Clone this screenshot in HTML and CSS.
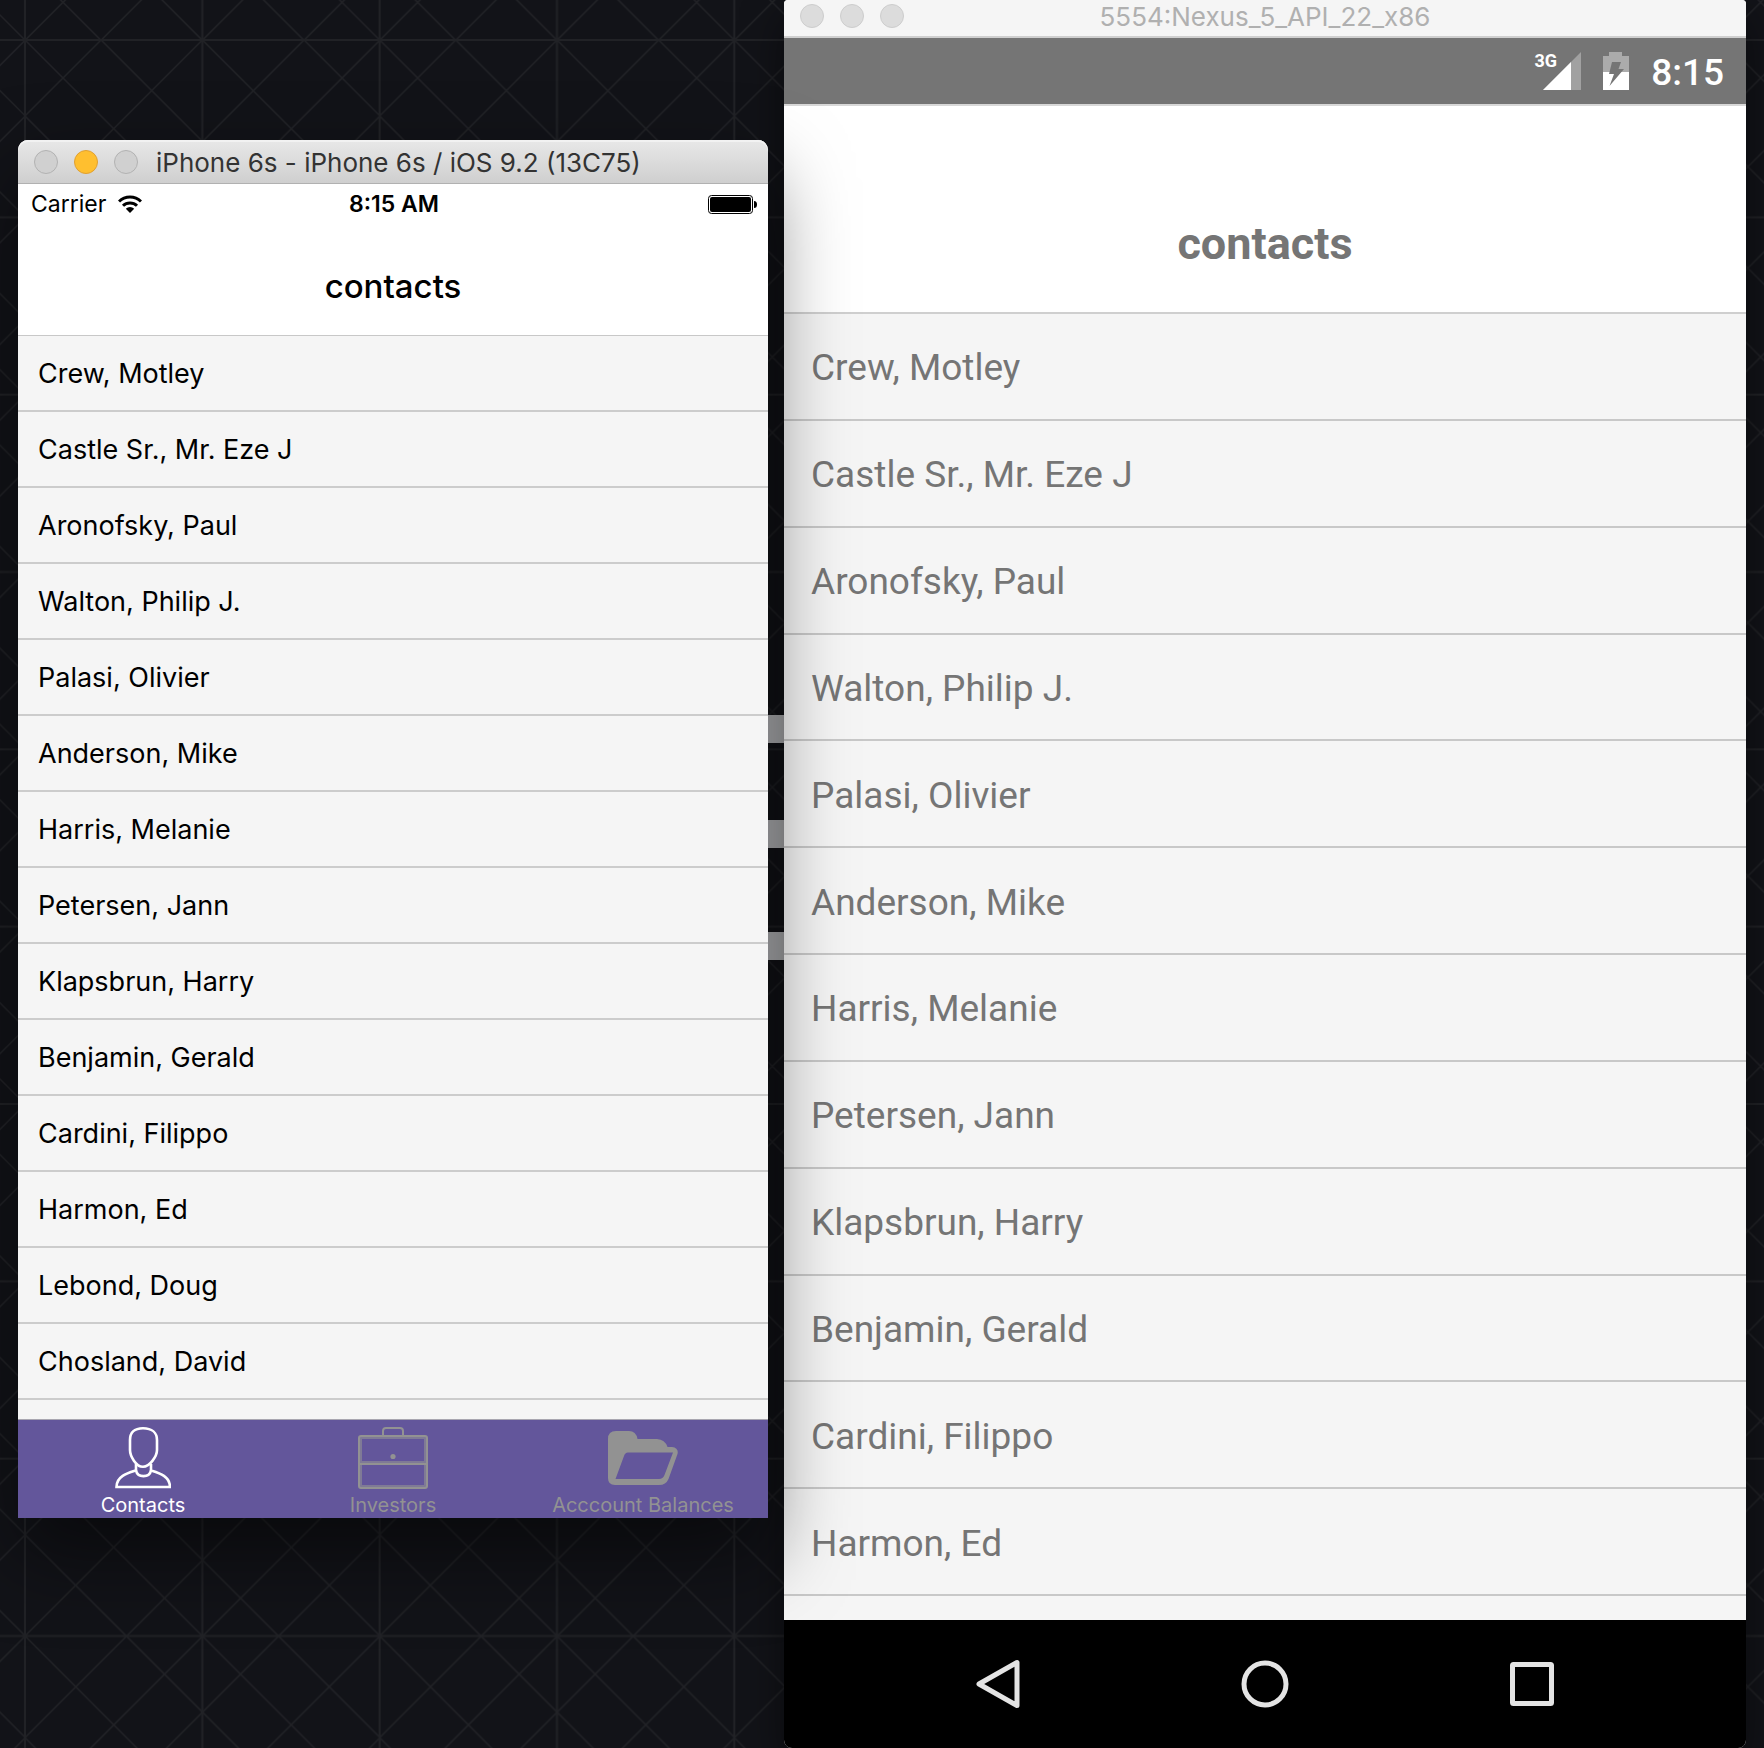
FILE: index.html
```html
<!DOCTYPE html>
<html lang="en">
<head>
<meta charset="utf-8">
<meta name="viewport" content="width=device-width, initial-scale=1">
<title>Contacts</title>
<link rel="stylesheet" href="styles.css">
</head>
<body>
<svg class="wallpaper" aria-hidden="true">
  <defs>
    <pattern id="lattice" x="25" y="40" width="354.667" height="354.667" patternUnits="userSpaceOnUse">
      <g fill="none" stroke="#212226" stroke-width="2">
        <path d="M0 0V355M177.333 0V355M0 0H355M0 177.333H355M354.667 0V355M0 354.667H355"/>
        <path stroke-width="1.500" d="M0 0L355 355M76 0L355 279M0 279L76 355M177.333 0L355 177.333M0 177.333L177.333 355M279 0L355 76M0 76L279 355"/>
        <path stroke-width="1.500" d="M355 0L0 355M76 0L0 76M355 76L76 355M177.333 0L0 177.333M355 177.333L177.333 355M279 0L0 279M355 279L279 355"/>
      </g>
    </pattern>
  </defs>
  <rect width="100%" height="100%" fill="url(#lattice)"/>
</svg>

<main class="desktop">
  <section class="window iphone" aria-label="iPhone simulator">
    <div class="titlebar">
      <div class="lights">
        <button class="light" type="button" aria-label="Close"></button>
        <button class="light light-on" type="button" aria-label="Minimize"></button>
        <button class="light" type="button" aria-label="Zoom"></button>
      </div>
      <span class="titlebar-text">iPhone 6s - iPhone 6s / iOS 9.2 (13C75)</span>
    </div>
    <div class="ios-status">
      <span class="carrier">Carrier
        <svg width="24" height="18" viewBox="0 0 24 18" aria-hidden="true">
          <g fill="none" stroke="#000" stroke-width="3">
            <path d="M1 6.500a15.500 15.500 0 0 1 22 0"/>
            <path d="M5 10.800a10 10 0 0 1 14 0"/>
          </g>
          <path d="M12 18L7.800 13.800a6 6 0 0 1 8.400 0Z"/>
        </svg>
      </span>
      <time class="ios-time">8:15 AM</time>
      <svg class="ios-battery" width="49" height="19" viewBox="0 0 49 19" aria-hidden="true">
        <rect x=".5" y=".5" width="44" height="18" rx="3" fill="none" stroke="#000"/>
        <rect x="2" y="2" width="41" height="15" rx="2"/>
        <path d="M46 6q3 0 3 3.500T46 13Z"/>
      </svg>
    </div>
    <h1 class="ios-title">contacts</h1>
    <ul class="ios-list">
      <li>Crew, Motley</li>
      <li>Castle Sr., Mr. Eze J</li>
      <li>Aronofsky, Paul</li>
      <li>Walton, Philip J.</li>
      <li>Palasi, Olivier</li>
      <li>Anderson, Mike</li>
      <li>Harris, Melanie</li>
      <li>Petersen, Jann</li>
      <li>Klapsbrun, Harry</li>
      <li>Benjamin, Gerald</li>
      <li>Cardini, Filippo</li>
      <li>Harmon, Ed</li>
      <li>Lebond, Doug</li>
      <li>Chosland, David</li>
    </ul>
    <nav class="tabs" aria-label="Sections">
      <button class="tab tab-active" type="button">
        <svg width="56" height="62" viewBox="0 0 56 62" fill="none" stroke="currentColor" stroke-width="2.600" aria-hidden="true">
          <path d="M28 1.300C19 1.300 15 6 15 13v10c0 6 6 16.800 13 16.800S42 29 42 23V13C42 6 37 1.300 28 1.300Z"/>
          <path d="M21 37v6.500C13 46 1.500 49 1.500 60h53.500C55 49 44 46 36 43.500V37"/>
          <path d="M21 43.500c1.500 7.500 13.500 7.500 15 0"/>
        </svg>
        <span>Contacts</span>
      </button>
      <button class="tab" type="button">
        <svg width="70" height="62" viewBox="0 0 70 62" fill="none" stroke="currentColor" stroke-width="2" aria-hidden="true">
          <rect x="1" y="9" width="68" height="52" rx="2"/>
          <path d="M25 9V4q0-3 3-3h14q3 0 3 3v5M2 37h66"/>
          <path d="M2 11h66M2 35h66M2 59h66M3 10v50M67 10v50" stroke-opacity=".6"/>
          <circle cx="35" cy="29.500" r="2.600" fill="currentColor" stroke="none"/>
        </svg>
        <span>Investors</span>
      </button>
      <button class="tab" type="button">
        <svg width="70" height="62" viewBox="0 -4 70 62" fill="currentColor" aria-hidden="true">
          <path fill-rule="evenodd" d="M0 8Q0 0 8 0H21Q28 0 29.500 8H49Q57 8.500 59.500 16H64Q71 17 69.500 23L60.500 48Q58 54 51 54H7Q0 54 0 47ZM20 21.500Q17 21.500 16 25L7.500 48H51Q55 48 56.500 44L65 21.500Z"/>
        </svg>
        <span>Acccount Balances</span>
      </button>
    </nav>
  </section>

  <div class="dashes" aria-hidden="true"><i></i><i></i><i></i></div>

  <section class="window android" aria-label="Android emulator">
    <div class="titlebar titlebar-idle">
      <div class="lights">
        <button class="light" type="button" aria-label="Close"></button>
        <button class="light" type="button" aria-label="Minimize"></button>
        <button class="light" type="button" aria-label="Zoom"></button>
      </div>
      <span class="titlebar-text">5554:Nexus_5_API_22_x86</span>
    </div>
    <div class="droid-status">
      <div class="signal">
        <span class="network">3G</span>
        <svg width="38" height="38" viewBox="0 0 38 38" aria-hidden="true">
          <path d="M38 0V38H0Z" fill="#a1a1a1"/>
          <path d="M28 10V38H0Z" fill="#fff"/>
        </svg>
      </div>
      <svg width="26" height="38" viewBox="0 0 26 38" aria-hidden="true">
        <path d="M6 0H19V4H26V20H0V4H6Z" fill="#ababab"/>
        <path d="M0 20H26V38H0Z" fill="#fff"/>
        <path d="M9 10H18L15.500 17H21L6.500 34L11 22H6Z" fill="#757575"/>
      </svg>
      <time class="droid-time">8:15</time>
    </div>
    <h1 class="droid-title">contacts</h1>
    <ul class="droid-list">
      <li>Crew, Motley</li>
      <li>Castle Sr., Mr. Eze J</li>
      <li>Aronofsky, Paul</li>
      <li>Walton, Philip J.</li>
      <li>Palasi, Olivier</li>
      <li>Anderson, Mike</li>
      <li>Harris, Melanie</li>
      <li>Petersen, Jann</li>
      <li>Klapsbrun, Harry</li>
      <li>Benjamin, Gerald</li>
      <li>Cardini, Filippo</li>
      <li>Harmon, Ed</li>
    </ul>
    <nav class="droid-nav" aria-label="System">
      <button type="button" aria-label="Back">
        <svg width="50" height="50" viewBox="0 0 50 50"><path d="M44 3.500V46.500L6 25Z"/></svg>
      </button>
      <button type="button" aria-label="Home">
        <svg width="50" height="50" viewBox="0 0 50 50"><circle cx="25" cy="25" r="21"/></svg>
      </button>
      <button type="button" aria-label="Overview">
        <svg width="50" height="50" viewBox="0 0 50 50"><rect x="5.500" y="5.500" width="39" height="39" rx="1"/></svg>
      </button>
    </nav>
  </section>
</main>
</body>
</html>
```
FILE: styles.css
```css
* {
  box-sizing: border-box;
}

body {
  margin: 0;
  background: #121318;
  font-family: Inter, "Liberation Sans", sans-serif;
  color: #000;
}

h1,
ul {
  margin: 0;
  padding: 0;
}

ul {
  list-style: none;
}

button {
  padding: 0;
  border: 0;
  background: none;
  font: inherit;
}

svg {
  display: block;
}

.wallpaper {
  position: absolute;
  inset: 0;
  width: 100%;
  height: 100%;
}

.desktop {
  position: relative;
  display: grid;
  grid-template-columns: 375fr 481fr;
  gap: 16px;
  align-items: start;
  min-height: 100vh;
  padding: 0 18px;
}

.window {
  display: flex;
  flex-direction: column;
  background: #f5f5f5;
}

/* Window chrome */

.titlebar {
  display: flex;
  align-items: center;
  gap: 18px;
  height: 44px;
  padding: 0 16px;
  border-bottom: 1px solid #b1b1b1;
  border-radius: 10px 10px 0 0;
  background: linear-gradient(#e8e8e8, #cfcfcf);
  box-shadow: inset 0 2px 0 #f2f2f2;
  color: #333;
  font-size: 26px;
  line-height: 34px;
  white-space: nowrap;
}

.titlebar-text {
  padding-top: 2px;
}

.titlebar-idle {
  display: grid;
  grid-template-columns: 1fr auto 1fr;
  align-items: start;
  height: 38px;
  border-bottom: 2px solid #cfcfcf;
  border-radius: 4px 4px 0 0;
  background: #f5f5f5;
  box-shadow: none;
  color: #b0b0b0;
}

.titlebar-idle .titlebar-text {
  padding-top: 0;
}

.lights {
  display: flex;
  gap: 16px;
}

.titlebar-idle .lights {
  padding-top: 4px;
}

.light {
  width: 24px;
  height: 24px;
  border: 1px solid #b2b2b2;
  border-radius: 50%;
  background: #d0d0d0;
}

.light-on {
  border-color: #e0a032;
  background: #ffbf2f;
}

.titlebar-idle .light {
  border-color: #cdcdcd;
  background: #dcdcdc;
}

/* iPhone window */

.iphone {
  z-index: 2;
  margin-top: 140px;
  border-radius: 10px 10px 0 0;
  box-shadow: 0 36px 80px rgba(0, 0, 0, .5);
}

.ios-status {
  display: grid;
  grid-template-columns: 1fr auto 1fr;
  align-items: center;
  height: 40px;
  padding: 0 11px 0 13px;
  background: #fff;
  font-size: 23px;
  line-height: 32px;
}

.carrier {
  display: flex;
  align-items: center;
  gap: 12px;
}

.ios-time {
  font-weight: 600;
}

.ios-battery {
  justify-self: end;
}

.ios-title {
  padding: 42px 0 29px;
  border-bottom: 1px solid #c8c8c8;
  background: #fff;
  font-size: 33px;
  font-weight: 500;
  line-height: 40px;
  text-align: center;
}

.ios-list {
  padding-bottom: 19px;
}

.ios-list li {
  height: 76px;
  padding: 0 20px;
  border-bottom: 2px solid #ccc;
  font-size: 27px;
  line-height: 76px;
}

.tabs {
  display: grid;
  grid-template-columns: repeat(3, 1fr);
  border-top: 1px solid #a8a6b0;
  background: #63569b;
}

.tab {
  display: flex;
  flex-direction: column;
  align-items: center;
  gap: 3px;
  padding: 7px 0 0;
  color: #929292;
  font-size: 20px;
  line-height: 26px;
  white-space: nowrap;
}

.tab-active {
  color: #fff;
}

/* Strokes of the wallpaper emblem, seen between the windows */

.dashes {
  position: absolute;
  top: 715px;
  left: 40%;
  width: 10%;
  display: grid;
  grid-template-rows: 105px 112px 28px;
}

.dashes i {
  height: 28px;
  background: #c4c5c8;
}

/* Android window */

.android {
  z-index: 1;
  min-height: 100vh;
  border-radius: 4px 4px 8px 8px;
  box-shadow: 0 20px 40px rgba(0, 0, 0, .5);
  color: #757575;
  font-family: Roboto, "Liberation Sans", sans-serif;
}

.android .titlebar {
  font-family: Inter, "Liberation Sans", sans-serif;
}

.droid-status {
  display: flex;
  align-items: center;
  justify-content: flex-end;
  gap: 22px;
  height: 68px;
  padding: 0 22px;
  border-bottom: 2px solid #d8d8d8;
  background: #757575;
  color: #fff;
}

.signal {
  position: relative;
}

.network {
  position: absolute;
  right: 24px;
  top: 0;
  font-size: 18px;
  font-weight: 700;
  line-height: 18px;
}

.droid-time {
  padding-top: 4px;
  font-size: 37px;
  font-weight: 500;
  line-height: 48px;
}

.droid-title {
  padding: 114px 0 44px;
  border-bottom: 2px solid #cfcfcf;
  background: #fff;
  font-size: 45px;
  font-weight: 700;
  line-height: 48px;
  text-align: center;
}

.droid-list {
  flex: 1;
  display: grid;
  grid-auto-rows: 1fr;
  padding-bottom: 24px;
}

.droid-list li {
  display: flex;
  align-items: center;
  min-height: 76px;
  padding: 4px 27px 0;
  border-bottom: 2px solid #c8c8c8;
  font-size: 37px;
  line-height: 48px;
}

.droid-nav {
  display: grid;
  grid-template-columns: repeat(3, 1fr);
  justify-items: center;
  padding: 39px 80px;
  border-radius: 0 0 8px 8px;
  background: #000;
}

.droid-nav svg {
  fill: none;
  stroke: #e4e4e4;
  stroke-width: 5;
  stroke-linejoin: round;
}
```
